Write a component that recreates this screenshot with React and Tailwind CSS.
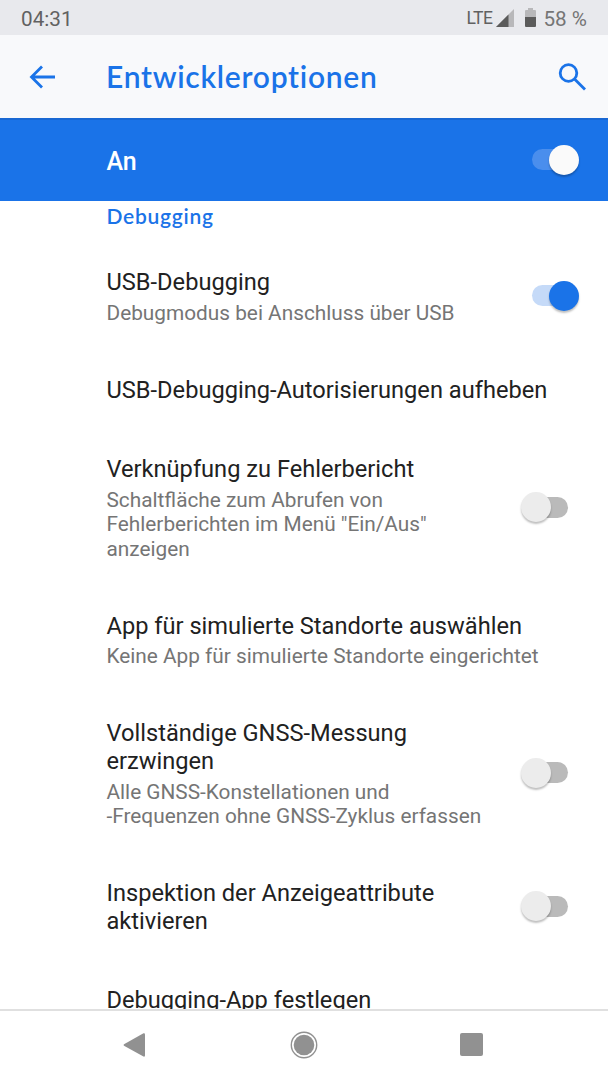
import { useState } from "react";

const options = [
    { title: ["USB-Debugging"], summary: ["Debugmodus bei Anschluss über USB"], type: "switch", on: true },
    { title: ["USB-Debugging-Autorisierungen aufheben"] },
    { title: ["Verknüpfung zu Fehlerbericht"], summary: ["Schaltfläche zum Abrufen von", "Fehlerberichten im Menü \"Ein/Aus\"", "anzeigen"], type: "switch", on: false },
    { title: ["App für simulierte Standorte auswählen"], summary: ["Keine App für simulierte Standorte eingerichtet"] },
    { title: ["Vollständige GNSS-Messung", "erzwingen"], summary: ["Alle GNSS-Konstellationen und", "-Frequenzen ohne GNSS-Zyklus erfassen"], type: "switch", on: false },
    { title: ["Inspektion der Anzeigeattribute", "aktivieren"], type: "switch", on: false },
    { title: ["Debugging-App festlegen"] },
];

function StatusBar() {
    return (
        <div className="flex h-[35px] shrink-0 items-center justify-between bg-[#e8e9ed] pl-[21px] pr-[21px] text-[#616161]">
            <span className="text-[20.7px] leading-[35px] pt-[3px]">04:31</span>
            <div className="flex items-center">
                <span className="pt-px text-[17.5px] leading-[35px] tracking-[-0.5px]">LTE</span>
                <svg className="ml-[4px] mt-px h-[18px] w-[18px]" viewBox="0 0 18 18">
                    <path d="M0 18 18 0V18Z" fill="#b8b8ba" />
                    <path d="M0 18 12.5 5.5V18Z" fill="#5b5b5b" />
                </svg>
                <svg className="ml-[11px] h-[19px] w-[11px]" viewBox="0 0 11 19">
                    <path d="M3 0H8V2H10Q11 2 11 3V9H0V3Q0 2 1 2H3Z" fill="#b8b8ba" />
                    <path d="M0 9H11V18Q11 19 10 19H1Q0 19 0 18Z" fill="#5b5b5b" />
                </svg>
                <span className="ml-[7px] pt-[3px] text-[20.7px] leading-[35px] text-[#757575]">58 %</span>
            </div>
        </div>
    );
}

// variant "bar" is the white switch on the blue master bar
function Switch({ on, variant, onClick }) {
    const bar = variant === "bar";
    const track = bar ? "bg-[#4a8eed]" : on ? "bg-[#c5daf8]" : "bg-[#bababa]";
    const thumb = bar ? "bg-[#fafafa]" : on ? "bg-[#1a73e8]" : "bg-[#ececec]";
    return (
        <button onClick={onClick} role="switch" aria-checked={on} className={`flex h-[30px] w-[47px] shrink-0 items-center ${on ? "justify-end" : "justify-start"}`}>
            <span className={`flex h-[21px] w-[35px] items-center rounded-full ${track} ${on ? "mr-3 justify-end" : "ml-3 justify-start"}`}>
                <span className={`size-[30px] shrink-0 rounded-full shadow-[0_2px_2px_rgba(0,0,0,0.25)] ${thumb} ${on ? "-mr-3" : "-ml-3"}`}></span>
            </span>
        </button>
    );
}

function Option({ option }) {
    const [on, setOn] = useState(option.on);
    return (
        <div className="flex shrink-0 items-center justify-between">
            <div className="whitespace-nowrap">
                <div className="text-[23.63px] leading-[27.7px] text-[#212121]">
                    {option.title.map((line) => <div key={line}>{line}</div>)}
                </div>
                {option.summary && (
                    <div className="mt-[4px] text-[20.8px] leading-[24.3px] text-[#757575]">
                        {option.summary.map((line) => <div key={line}>{line}</div>)}
                    </div>
                )}
            </div>
            {option.type === "switch" && (
                <div className={on ? "mr-[29px] pb-[3px]" : "mr-[40.5px] pb-[3px]"}>
                    <Switch on={on} onClick={() => setOn(!on)} />
                </div>
            )}
        </div>
    );
}

export default function App() {
    return (
        <div className="flex h-[1080px] w-[608px] flex-col overflow-hidden bg-white font-[Roboto,sans-serif]">
            <StatusBar />
            <header className="flex h-[83px] shrink-0 items-center bg-[#f8f9fb] pl-[29px] pr-[21px] text-[#1a73e8]">
                <svg className="h-6 w-[26px]" viewBox="0 0 26 24" fill="none" stroke="currentColor" strokeWidth="2.8">
                    <path d="M26 12H3M13 1.5 2.5 12 13 22.5" />
                </svg>
                <h1 className="ml-[51px] grow pb-px font-[Lato,sans-serif] text-[30px] font-semibold leading-9 tracking-[0.72px]">Entwickleroptionen</h1>
                <svg className="h-7 w-[29px]" viewBox="0 0 29 28" fill="none" stroke="currentColor" strokeWidth="2.8">
                    <circle cx="10.5" cy="10" r="8.3" />
                    <path d="M16.5 16 27 26.5" />
                </svg>
            </header>
            <div className="flex h-[83px] shrink-0 items-center justify-between border-t-2 border-t-[#1968d3] bg-[#1a73e8] pb-[2px] pl-[106.5px] pr-[29px]">
                <span className="pt-1 text-[25px] font-medium leading-7 text-white">An</span>
                <Switch on variant="bar" />
            </div>
            <main className="flex min-h-0 grow flex-col gap-[51.8px] overflow-hidden pl-[106.5px]">
                <h2 className="-mb-[12.8px] shrink-0 pb-px pt-[2px] font-[Lato,sans-serif] text-[21px] font-semibold leading-[26px] tracking-[0.75px] text-[#1a73e8]">Debugging</h2>
                {options.map((option) => <Option key={option.title[0]} option={option} />)}
            </main>
            <nav className="flex h-[71px] shrink-0 items-center border-t-2 border-[#e0e0e0] bg-white pb-[2px] pl-[123px] text-[#919191]">
                <svg className="h-6 w-[22px]" viewBox="0 0 22 24" fill="currentColor">
                    <path d="M1 11.2 20.5.3Q22 0 22 1.5V22.5Q22 24 20.5 23.5L1 12.8Q0 12 1 11.2Z" />
                </svg>
                <svg className="ml-[144.5px] size-7" viewBox="0 0 28 28">
                    <circle cx="14" cy="14" r="12.7" fill="none" stroke="currentColor" strokeWidth="1.4" />
                    <circle cx="14" cy="14" r="10.3" fill="currentColor" />
                </svg>
                <span className="ml-[142.5px] size-[23px] rounded-[2px] bg-[#919191]"></span>
            </nav>
        </div>
    );
}
